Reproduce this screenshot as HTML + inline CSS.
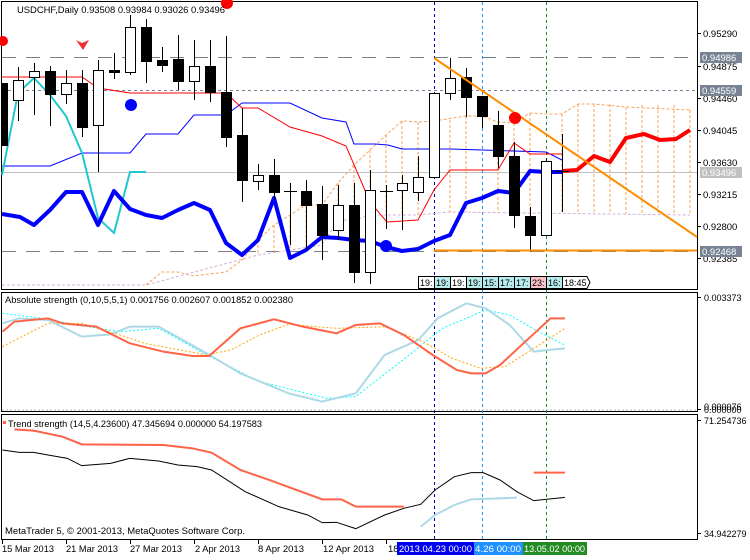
<!DOCTYPE html>
<html><head><meta charset="utf-8"><style>
body{margin:0;background:#fff;width:750px;height:560px;overflow:hidden}
svg{display:block;font-family:"Liberation Sans",sans-serif;font-size:9.5px}
</style></head><body>
<svg width="750" height="560" viewBox="0 0 750 560">
<rect width="750" height="560" fill="#fff"/>
<rect x="1.5" y="1.5" width="696" height="288" fill="none" stroke="#000"/>
<rect x="1.5" y="292.5" width="696" height="119" fill="none" stroke="#000"/>
<rect x="1.5" y="414.5" width="696" height="125" fill="none" stroke="#000"/>
<line x1="2" y1="410" x2="697" y2="410" stroke="#bbb" stroke-dasharray="2,2"/>

<line x1="2" y1="57.5" x2="697" y2="57.5" stroke="#778088" stroke-width="1" stroke-dasharray="14,10"/>
<line x1="2" y1="90.5" x2="697" y2="90.5" stroke="#778099" stroke-dasharray="3,3"/>
<line x1="2" y1="172.5" x2="697" y2="172.5" stroke="#c0c0c0"/>
<line x1="2" y1="251.5" x2="697" y2="251.5" stroke="#778088" stroke-dasharray="14,10"/>

<g stroke-dasharray="3,3">
<line x1="434.5" y1="2" x2="434.5" y2="539" stroke="#0000cc"/>
<line x1="482.5" y1="2" x2="482.5" y2="539" stroke="#1e90ff"/>
<line x1="546.5" y1="2" x2="546.5" y2="539" stroke="#228b22"/>
</g>

<polyline fill="none" stroke="#f4a460" stroke-dasharray="3,2" points="146,285 162,272 178,272 194,276 226,272 242,260 258,240 274,225 290,215 306,205 322,205 338,183 354,165 370,150 386,135 402,121 418,122 434,121 466,116 482,116 498,122 514,123 530,113 546,114 562,114 578,104 594,104 626,107 690,110"/>
<polyline fill="none" stroke="#d8b0d8" stroke-dasharray="3,2" points="2,285 146,285 258,255 290,250 322,245 338,220 354,220 370,215 418,215 450,212 690,215"/>
<g stroke="#f4a460" stroke-dasharray="3,2">
<line x1="258" y1="240" x2="258" y2="255"/><line x1="274" y1="225" x2="274" y2="253"/><line x1="290" y1="215" x2="290" y2="250"/><line x1="306" y1="205" x2="306" y2="248"/><line x1="322" y1="205" x2="322" y2="245"/><line x1="338" y1="183" x2="338" y2="220"/><line x1="354" y1="165" x2="354" y2="220"/><line x1="370" y1="150" x2="370" y2="215"/><line x1="386" y1="135" x2="386" y2="215"/><line x1="402" y1="121" x2="402" y2="215"/><line x1="418" y1="122" x2="418" y2="215"/><line x1="450" y1="120" x2="450" y2="212"/><line x1="466" y1="116" x2="466" y2="212"/><line x1="498" y1="122" x2="498" y2="213"/><line x1="514" y1="123" x2="514" y2="213"/><line x1="530" y1="113" x2="530" y2="214"/><line x1="562" y1="114" x2="562" y2="214"/><line x1="578" y1="104" x2="578" y2="214"/><line x1="594" y1="104" x2="594" y2="214"/><line x1="610" y1="104" x2="610" y2="214"/><line x1="626" y1="107" x2="626" y2="214"/><line x1="642" y1="105" x2="642" y2="214"/><line x1="658" y1="105" x2="658" y2="214"/><line x1="674" y1="105" x2="674" y2="214"/><line x1="690" y1="110" x2="690" y2="214"/>
</g>

<polyline fill="none" stroke="#0000ff" points="2,166 50,166 82,153 130,153 146,134 178,134 194,115 226,115 242,103 290,103 322,118 346,122 354,144 375,144 388,145 402,149 450,149 482,150 546,152 562,160"/>
<polyline fill="none" stroke="#ff0000" points="2,77 82,77 98,88 130,93 226,93 242,108 258,108 290,127 322,136 346,146 370,202 387,222 418,220 434,190 450,170 498,170 514,143 530,154 562,154"/>
<polyline fill="none" stroke="#20c8d0" stroke-width="2" points="2,175 18,93 34,78 50,95 66,116 82,153 98,218 114,233 130,172 146,172"/>
<polyline fill="none" stroke="#0000ff" stroke-width="4" stroke-linejoin="round" points="2,214 20,217 34,225 50,210 66,192 82,192 98,225 114,191 130,209 146,215 162,218 178,210 194,203 210,210 226,243 242,255 258,240 274,198 290,258 306,250 322,237 338,238 354,240 370,241 386,247 402,251 418,249 434,241 450,235 466,203 482,198 498,191 514,193 530,171 546,172 562,172"/>
<polyline fill="none" stroke="#ff0000" stroke-width="4" stroke-linejoin="round" points="562,171 577,170 594,156 610,162 626,138 644,134 660,140 676,139 690,130"/>

<g stroke="#000" stroke-width="1">
<line x1="18.5" y1="67" x2="18.5" y2="121"/><line x1="34.5" y1="63" x2="34.5" y2="115"/><line x1="50.5" y1="66" x2="50.5" y2="126"/><line x1="66.5" y1="70" x2="66.5" y2="104"/><line x1="82.5" y1="70" x2="82.5" y2="137"/><line x1="98.5" y1="60" x2="98.5" y2="172"/><line x1="114.5" y1="53" x2="114.5" y2="79"/><line x1="130.5" y1="15" x2="130.5" y2="75"/><line x1="146.5" y1="19" x2="146.5" y2="83"/><line x1="162.5" y1="47" x2="162.5" y2="72"/><line x1="178.5" y1="35" x2="178.5" y2="90"/><line x1="194.5" y1="40" x2="194.5" y2="100"/><line x1="210.5" y1="40" x2="210.5" y2="102"/><line x1="226.5" y1="36" x2="226.5" y2="147"/><line x1="242.5" y1="108" x2="242.5" y2="202"/><line x1="258.5" y1="164" x2="258.5" y2="190"/><line x1="274.5" y1="159" x2="274.5" y2="200"/><line x1="290.5" y1="183" x2="290.5" y2="245"/><line x1="306.5" y1="180" x2="306.5" y2="250"/><line x1="322.5" y1="186" x2="322.5" y2="260"/><line x1="338.5" y1="185" x2="338.5" y2="240"/><line x1="354.5" y1="183" x2="354.5" y2="283"/><line x1="370.5" y1="170" x2="370.5" y2="284"/><line x1="386.5" y1="185" x2="386.5" y2="229"/><line x1="402.5" y1="175" x2="402.5" y2="230"/><line x1="418.5" y1="156" x2="418.5" y2="201"/><line x1="450.5" y1="58" x2="450.5" y2="100"/><line x1="466.5" y1="68" x2="466.5" y2="117"/><line x1="482.5" y1="96" x2="482.5" y2="128"/><line x1="498.5" y1="111" x2="498.5" y2="168"/><line x1="514.5" y1="142" x2="514.5" y2="228"/><line x1="530.5" y1="207" x2="530.5" y2="252"/><line x1="546.5" y1="158" x2="546.5" y2="235"/><line x1="562.5" y1="134" x2="562.5" y2="212"/>
<line x1="284" y1="191.5" x2="297" y2="191.5"/><line x1="380" y1="191.5" x2="393" y2="191.5"/><line x1="556" y1="171.5" x2="569" y2="171.5"/>
</g>
<g stroke="#000" fill="#000">
<rect x="2.5" y="83.5" width="5" height="62"/><rect x="45.5" y="71.5" width="10" height="23"/><rect x="77.5" y="83.5" width="10" height="44"/><rect x="109.5" y="70.5" width="10" height="2"/><rect x="141.5" y="27.5" width="10" height="34"/><rect x="157.5" y="60.5" width="10" height="5"/><rect x="173.5" y="59.5" width="10" height="22"/><rect x="205.5" y="66.5" width="10" height="26"/><rect x="221.5" y="92.5" width="10" height="45"/><rect x="237.5" y="135.5" width="10" height="45"/><rect x="269.5" y="175.5" width="10" height="17"/><rect x="301.5" y="191.5" width="10" height="14"/><rect x="317.5" y="204.5" width="10" height="31"/><rect x="349.5" y="205.5" width="10" height="67"/><rect x="461.5" y="77.5" width="10" height="20"/><rect x="477.5" y="96.5" width="10" height="20"/><rect x="493.5" y="125.5" width="10" height="31"/><rect x="509.5" y="156.5" width="10" height="59"/><rect x="525.5" y="216.5" width="10" height="19"/>
</g>
<g stroke="#000" fill="#fff">
<rect x="13.5" y="80.5" width="10" height="20"/><rect x="29.5" y="71.5" width="10" height="6"/><rect x="61.5" y="83.5" width="10" height="11"/><rect x="93.5" y="70.5" width="10" height="55"/><rect x="125.5" y="27.5" width="10" height="45"/><rect x="189.5" y="66.5" width="10" height="15"/><rect x="253.5" y="175.5" width="10" height="6"/><rect x="333.5" y="205.5" width="10" height="25"/><rect x="365.5" y="190.5" width="10" height="82"/><rect x="397.5" y="183.5" width="10" height="7"/><rect x="413.5" y="177.5" width="10" height="15"/><rect x="429.5" y="93.5" width="10" height="84"/><rect x="445.5" y="78.5" width="10" height="15"/><rect x="541.5" y="161.5" width="10" height="74"/>
</g>

<line x1="434" y1="58" x2="697" y2="237" stroke="#ff8c00" stroke-width="2"/>
<line x1="434" y1="250.5" x2="697" y2="250.5" stroke="#ff8c00" stroke-width="2"/>

<circle cx="3" cy="41" r="5" fill="#f00"/>
<circle cx="227" cy="3" r="6" fill="#f00"/>
<circle cx="515" cy="118" r="6" fill="#f00"/>
<circle cx="131" cy="105" r="6" fill="#00f"/>
<circle cx="386" cy="246" r="6" fill="#00f"/>
<path d="M76,40 L82,43 L89,40 L83,50 Z" fill="#f03030"/>

<g stroke="#000">
<rect x="418.5" y="276.5" width="16" height="12" fill="#fff"/><rect x="434.5" y="276.5" width="16" height="12" fill="#b8ecec"/><rect x="450.5" y="276.5" width="16" height="12" fill="#fff"/><rect x="466.5" y="276.5" width="16" height="12" fill="#b8ecec"/><rect x="482.5" y="276.5" width="16" height="12" fill="#b8ecec"/><rect x="498.5" y="276.5" width="16" height="12" fill="#b8ecec"/><rect x="514.5" y="276.5" width="16" height="12" fill="#b8ecec"/><rect x="530.5" y="276.5" width="16" height="12" fill="#f8c0c8"/><rect x="546.5" y="276.5" width="16" height="12" fill="#b8ecec"/><path d="M562.5,276.5 H587 L590,282.5 L587,288.5 H562.5 Z" fill="#fff"/>
</g>
<g font-size="9" fill="#000">
<text x="420" y="286">19:</text><text x="436" y="286">19:</text><text x="452" y="286">19:</text><text x="468" y="286">19:</text><text x="484" y="286">15:</text><text x="500" y="286">17:</text><text x="516" y="286">17:</text><text x="532" y="286">23:</text><text x="548" y="286">16:</text><text x="564" y="286">18:45</text>
</g>

<text x="17" y="13" textLength="208" lengthAdjust="spacingAndGlyphs">USDCHF,Daily  0.93508 0.93984 0.93026 0.93496</text>

<g stroke="#000">
<line x1="697" y1="33.5" x2="701" y2="33.5"/><line x1="697" y1="66.5" x2="701" y2="66.5"/><line x1="697" y1="98.5" x2="701" y2="98.5"/><line x1="697" y1="130.5" x2="701" y2="130.5"/><line x1="697" y1="162.5" x2="701" y2="162.5"/><line x1="697" y1="194.5" x2="701" y2="194.5"/><line x1="697" y1="226.5" x2="701" y2="226.5"/><line x1="697" y1="258.5" x2="701" y2="258.5"/>
<line x1="697" y1="297.5" x2="701" y2="297.5"/><line x1="697" y1="409.5" x2="701" y2="409.5"/><line x1="697" y1="420.5" x2="701" y2="420.5"/><line x1="697" y1="533.5" x2="701" y2="533.5"/>
</g>
<g>
<text x="703" y="37">0.95290</text><text x="703" y="70">0.94875</text><text x="703" y="102">0.94460</text><text x="703" y="134">0.94045</text><text x="703" y="166">0.93630</text><text x="703" y="198">0.93215</text><text x="703" y="230">0.92800</text><text x="703" y="262">0.92385</text>
</g>
<rect x="700" y="52" width="42" height="11" fill="#778393"/><text x="702" y="61" fill="#fff">0.94986</text>
<rect x="700" y="85" width="42" height="11" fill="#778393"/><text x="702" y="94" fill="#fff">0.94559</text>
<rect x="700" y="167" width="42" height="11" fill="#c0c0c0"/><text x="702" y="176" fill="#fff">0.93496</text>
<rect x="700" y="246" width="42" height="11" fill="#778393"/><text x="702" y="255" fill="#fff">0.92468</text>
<g font-size="9">
<text x="704" y="301">0.003373</text><text x="704" y="410">0.000076</text><text x="704" y="413">0.000000</text><text x="704" y="424">71.254736</text><text x="704" y="537">34.942279</text>
</g>

<text x="5" y="303" textLength="288" lengthAdjust="spacingAndGlyphs">Absolute strength (0,10,5,5,1) 0.001756 0.002607 0.001852 0.002380</text>
<g transform="translate(0,285) scale(0.4808,0.3333)" fill="none">
<polyline vector-effect="non-scaling-stroke" stroke="#00ffff" stroke-dasharray="2,2" points="5,85 90,100 160,120 250,140 330,130 430,210 540,290 680,340 740,335 860,200 920,130 1010,75 1060,90 1120,140 1175,180"/>
<polyline vector-effect="non-scaling-stroke" stroke="#ffa500" stroke-dasharray="2,2" points="5,185 100,115 170,115 250,150 300,175 430,210 480,195 540,150 600,118 700,130 800,125 880,170 940,220 1000,250 1050,245 1100,200 1175,130"/>
<polyline vector-effect="non-scaling-stroke" stroke="#add8e6" stroke-width="2" points="5,115 40,100 100,105 170,155 230,148 270,125 330,125 380,165 430,205 500,265 600,325 670,350 740,325 800,210 870,165 910,100 970,55 1010,70 1060,120 1110,200 1140,195 1175,190"/>
<polyline vector-effect="non-scaling-stroke" stroke="#ff6347" stroke-width="2" points="5,140 30,110 100,100 130,115 200,125 270,175 340,200 400,213 435,213 500,130 570,103 630,125 700,145 740,120 790,115 840,150 900,210 950,255 980,265 1010,265 1040,240 1100,160 1145,100 1175,100"/>
</g>

<rect x="3" y="421" width="3" height="3" fill="#ff6347"/>
<text x="8" y="427" textLength="254" lengthAdjust="spacingAndGlyphs">Trend strength (14,5,4.23600) 47.345694 0.000000 54.197583</text>
<g transform="translate(0,400) scale(0.4808,0.3333)" fill="none">
<polyline vector-effect="non-scaling-stroke" stroke="#ff6347" stroke-width="2" points="30,88 70,92 130,110 170,133 340,135 400,145 440,158 500,210 560,240 670,298 710,298 740,320 840,320"/>
<polyline vector-effect="non-scaling-stroke" stroke="#ff6347" stroke-width="2" points="1110,218 1175,218"/>
<polyline vector-effect="non-scaling-stroke" stroke="#000" points="5,150 40,157 70,157 100,165 140,175 170,197 230,190 270,175 330,183 370,195 410,200 440,210 510,275 580,320 640,345 670,368 700,367 740,386 800,345 840,325 875,313 905,270 945,230 980,218 1005,218 1040,240 1075,275 1110,302 1175,292"/>
<polyline vector-effect="non-scaling-stroke" stroke="#add8e6" stroke-width="2" points="875,380 905,345 945,315 980,298 1075,293"/>
</g>
<text x="5" y="534" textLength="240" lengthAdjust="spacingAndGlyphs">MetaTrader 5, © 2001-2013, MetaQuotes Software Corp.</text>

<g stroke="#000"><line x1="2.5" y1="540" x2="2.5" y2="544"/><line x1="66.5" y1="540" x2="66.5" y2="544"/><line x1="130.5" y1="540" x2="130.5" y2="544"/><line x1="194.5" y1="540" x2="194.5" y2="544"/><line x1="258.5" y1="540" x2="258.5" y2="544"/><line x1="322.5" y1="540" x2="322.5" y2="544"/><line x1="386.5" y1="540" x2="386.5" y2="544"/></g>
<g>
<text x="2" y="552" textLength="52" lengthAdjust="spacingAndGlyphs">15 Mar 2013</text><text x="66" y="552" textLength="52" lengthAdjust="spacingAndGlyphs">21 Mar 2013</text><text x="130" y="552" textLength="52" lengthAdjust="spacingAndGlyphs">27 Mar 2013</text><text x="195" y="552" textLength="45" lengthAdjust="spacingAndGlyphs">2 Apr 2013</text><text x="258" y="552" textLength="46" lengthAdjust="spacingAndGlyphs">8 Apr 2013</text><text x="323" y="552" textLength="51" lengthAdjust="spacingAndGlyphs">12 Apr 2013</text><text x="388" y="552">18</text>
</g>
<rect x="397" y="542" width="77" height="13" fill="#0000ee"/><text x="399" y="552" fill="#fff" textLength="73" lengthAdjust="spacingAndGlyphs">2013.04.23 00:00</text>
<rect x="474" y="542" width="49" height="13" fill="#1e90ff"/><text x="475" y="552" fill="#fff" textLength="46" lengthAdjust="spacingAndGlyphs">4.26 00:00</text>
<rect x="523" y="542" width="64" height="13" fill="#228b22"/><text x="524" y="552" fill="#fff" textLength="61" lengthAdjust="spacingAndGlyphs">13.05.02 00:00</text>
</svg>
</body></html>
